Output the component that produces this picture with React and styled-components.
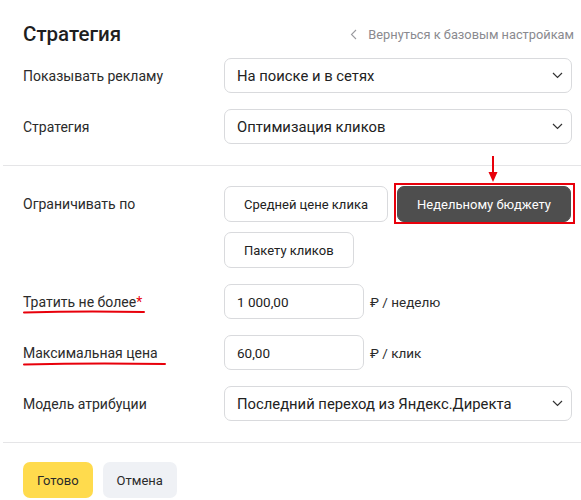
import styled, { createGlobalStyle } from 'styled-components';

const GlobalStyle = createGlobalStyle`
  * {
    box-sizing: border-box;
  }

  body {
    margin: 0;
    background: #fff;
    font-family: Roboto, 'Noto Sans', sans-serif;
    color: #222;
  }
`;

const Chevron = () => (
  <svg width='11' height='7' viewBox='0 0 11 7' fill='none'>
    <path d='M1 1l4.5 4.5L10 1' stroke='#333' strokeWidth='1.2' />
  </svg>
);

function Select({ value }) {
  return (
    <SelectBox>
      <span>{value}</span>
      <Chevron />
    </SelectBox>
  );
}

function Marked({ children, width, top }) {
  return (
    <MarkedLabel>
      {children}
      <Underline width={width} style={{ top }} viewBox={`0 0 ${width} 4`}>
        <path
          d={`M1 2.4 Q ${width / 2} 0.8 ${width - 1} 2`}
          stroke='#e8000b'
          strokeWidth='2'
          fill='none'
          strokeLinecap='round'
        />
      </Underline>
    </MarkedLabel>
  );
}

export default function App() {
  return (
    <>
      <GlobalStyle />
      <Panel>
        <Section>
          <Header>
            <Title>Стратегия</Title>
            <BackLink>
              <svg width='7' height='11' viewBox='0 0 7 11' fill='none'>
                <path d='M6 1L1.5 5.5 6 10' stroke='#9a9a9f' strokeWidth='1.1' />
              </svg>
              Вернуться к базовым настройкам
            </BackLink>
          </Header>
          <Row>
            <Label>Показывать рекламу</Label>
            <Select value='На поиске и в сетях' />
          </Row>
          <Row>
            <Label>Стратегия</Label>
            <Select value='Оптимизация кликов' />
          </Row>
        </Section>

        <Divider />

        <Section $top={20} $bottom={21}>
          <Row $top>
            <Label $tall>Ограничивать по</Label>
            <Options>
              <Option>Средней цене клика</Option>
              <Option $active>
                Недельному бюджету
                <Arrow width='10' height='27' viewBox='0 0 10 27'>
                  <path d='M5 0v18' stroke='#e8000b' strokeWidth='2' />
                  <path d='M0.5 16h9L5 26z' fill='#e8000b' />
                </Arrow>
              </Option>
              <Option>Пакету кликов</Option>
            </Options>
          </Row>
          <Row>
            <Label>
              <Marked width={122} top={18}>
                Тратить не более<Required>*</Required>
              </Marked>
            </Label>
            <Amount>
              <Input>1 000,00</Input>
              <Unit>₽ / неделю</Unit>
            </Amount>
          </Row>
          <Row>
            <Label>
              <Marked width={143} top={19}>
                Максимальная цена
              </Marked>
            </Label>
            <Amount>
              <Input>60,00</Input>
              <Unit>₽ / клик</Unit>
            </Amount>
          </Row>
          <Row>
            <Label>Модель атрибуции</Label>
            <Select value='Последний переход из Яндекс.Директа' />
          </Row>
        </Section>

        <Divider />

        <Footer>
          <Button $primary>Готово</Button>
          <Button>Отмена</Button>
        </Footer>
      </Panel>
    </>
  );
}

const Panel = styled.div`
  width: 581px;
  height: 500px;
  overflow: hidden;
  padding-top: 22px;
`;

const Section = styled.section`
  padding: ${(p) => p.$top || 0}px 9px ${(p) => p.$bottom || 21}px 23px;
  display: flex;
  flex-direction: column;
  gap: 16px;
`;

const Header = styled.div`
  display: flex;
  align-items: center;
  justify-content: space-between;
  height: 24px;
  margin-right: -2px;
  margin-bottom: -4px;
`;

const Title = styled.h1`
  margin: 0;
  font-size: 20.5px;
  font-weight: 500;
  line-height: 24px;
  color: #1e1e1e;
`;

const BackLink = styled.a`
  display: flex;
  align-items: center;
  gap: 11px;
  font-size: 12.8px;
  color: #8a8a8f;
  cursor: pointer;
`;

const Row = styled.div`
  display: grid;
  grid-template-columns: 201px 348px;
  align-items: ${(p) => (p.$top ? 'start' : 'center')};
`;

const Label = styled.div`
  font-size: 14px;
  line-height: ${(p) => (p.$tall ? '36px' : '20px')};
  color: #2b2b2b;
`;

const MarkedLabel = styled.span`
  position: relative;
  display: inline-block;
`;

const Underline = styled.svg`
  position: absolute;
  left: 0;
  width: ${(p) => p.width}px;
  height: 4px;
`;

const Required = styled.span`
  color: #e8000b;
`;

const SelectBox = styled.div`
  height: 35px;
  border: 1px solid #d9dadd;
  border-radius: 7px;
  padding: 0 8px 0 12px;
  display: flex;
  align-items: center;
  justify-content: space-between;
  font-size: 14.8px;
  color: #222;
`;

const Options = styled.div`
  display: flex;
  flex-wrap: wrap;
  gap: 10px 9px;
  width: 350px;
`;

const Option = styled.button`
  position: relative;
  height: 36px;
  padding: 0 19px;
  border-radius: 7px;
  border: 1px solid ${(p) => (p.$active ? '#4e4e4e' : '#d9dadd')};
  background: ${(p) => (p.$active ? '#4e4e4e' : '#fff')};
  color: ${(p) => (p.$active ? '#fff' : '#222')};
  font-family: inherit;
  font-size: 13px;

  &::after {
    content: '';
    display: ${(p) => (p.$active ? 'block' : 'none')};
    position: absolute;
    inset: -4px -5px -3px -4px;
    border: 2px solid #e8000b;
  }
`;

const Arrow = styled.svg`
  position: absolute;
  left: 90px;
  top: -31px;
`;

const Amount = styled.div`
  display: flex;
  align-items: center;
  gap: 6px;
`;

const Input = styled.div`
  width: 140px;
  height: 35px;
  border: 1px solid #d9dadd;
  border-radius: 7px;
  padding: 0 12px;
  display: flex;
  align-items: center;
  font-size: 13.5px;
`;

const Unit = styled.span`
  font-size: 13.5px;
  color: #2b2b2b;
`;

const Divider = styled.hr`
  margin: 0 0 0 3px;
  border: none;
  border-top: 1px solid #e5e5e7;
`;

const Footer = styled.div`
  display: flex;
  gap: 10px;
  padding: 19px 23px 0;
`;

const Button = styled.button`
  height: 36px;
  padding: 0 14px;
  border: none;
  border-radius: 7px;
  background: ${(p) => (p.$primary ? '#ffdb4d' : '#eff1f5')};
  color: #2b2b2b;
  font-family: inherit;
  font-size: 13px;
`;
